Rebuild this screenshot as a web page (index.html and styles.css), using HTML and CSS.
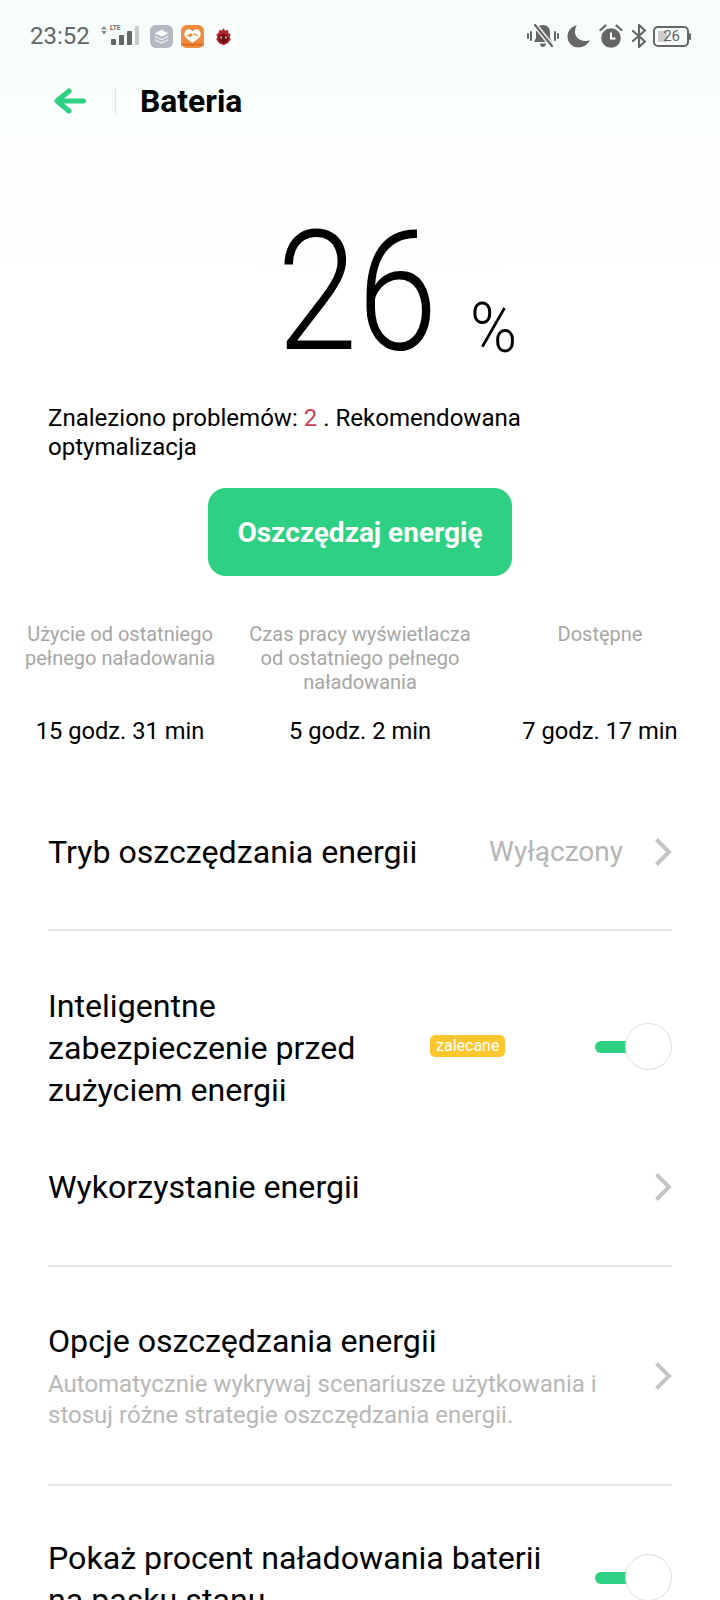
FILE: index.html
```html
<!DOCTYPE html>
<html>
  <head>
    <title>Bateria</title>
    <link rel="stylesheet" href="styles.css">
  </head>
  <body>
    <main id="screen">
      <div class="status-bar">
        <div class="status-left">
          <span class="clock">23:52</span>
          <svg class="signal" viewBox="0 0 42 24">
            <path d="M4 2l3 3.500H1zM1 7h6l-3 3.500z" fill="#8a8a8a" />
            <text x="10" y="5.500" class="lte">LTE</text>
            <rect x="11" y="15" width="5" height="6" rx="1" fill="#666" />
            <rect x="19" y="11" width="5" height="10" rx="1" fill="#666" />
            <rect x="27" y="7" width="5" height="14" rx="1" fill="#666" />
            <rect x="35" y="2" width="4" height="19" rx="1" fill="#c9cccb" />
          </svg>
          <svg class="app-icon" viewBox="0 0 24 24">
            <rect width="24" height="24" rx="6" fill="#b4b9c2" />
            <path d="M12 5l7 3.500-7 3.500-7-3.500z" fill="#fff" />
            <path d="M5 11l7 3.500 7-3.500v1.500l-7 3.500-7-3.500z" fill="#eef0f3" />
            <path d="M5 14.500l7 3.500 7-3.500v1.500l-7 3.500-7-3.500z" fill="#eef0f3" />
          </svg>
          <svg class="app-icon" viewBox="0 0 24 24">
            <rect width="24" height="24" rx="6" fill="#f08a3c" />
            <path d="M12 18.500C7 15 3.500 12.500 3.500 9 3.500 6.500 5.500 4.500 8 4.500c1.700 0 3 .8 4 2 1-1.200 2.300-2 4-2 2.500 0 4.500 2 4.500 4.500 0 3.500-3.500 6-8.500 9.500z" fill="#fff" />
            <path d="M6 11l4-2.500 2 1.500 2-1.500 4 2.500-1 .8-4-1.800-3 2.500-2-.5z" fill="#f08a3c" />
            <rect y="19.500" width="24" height="2" fill="#d96f22" />
          </svg>
          <svg class="app-icon" viewBox="0 0 24 24">
            <rect width="24" height="24" fill="#fff" />
            <path d="M12 3.500l1.800 2.500 2.700-1 .5 3 2.500 2-1 2.500 1 2.500-3 4-4.500 2-4.500-2-3-4 1-2.500-1-2.500 2.500-2 .5-3 2.700 1z" fill="#b3262b" />
            <circle cx="12" cy="14" r="5" fill="#6f1216" />
            <circle cx="9.500" cy="13" r="1" fill="#f3c9c9" />
            <circle cx="14.500" cy="13" r="1" fill="#f3c9c9" />
          </svg>
        </div>
        <div class="status-right">
          <svg class="status-icon bell" viewBox="0 0 32 24">
            <path d="M16 1c-4.500 0-7 3-7 7.500V14l-2 4h18l-2-4V8.500C23 4 20.500 1 16 1zM13 19.500h6c0 2-1.300 3.500-3 3.500s-3-1.500-3-3.500z" fill="#666" />
            <path d="M8 1l17 21" stroke="#f8fdfc" stroke-width="5" />
            <path d="M8 1l17 21" stroke="#666" stroke-width="2.200" stroke-linecap="round" />
            <path d="M4 8v8M1 10v4M28 8v8M31 10v4" stroke="#666" stroke-width="2" stroke-linecap="round" />
          </svg>
          <svg class="status-icon moon" viewBox="0 0 24 24">
            <path d="M10 1C4.500 2.500 0.500 6.800 0.500 12.500 0.500 18.800 5.500 23.500 11.500 23.500c5 0 9.500-3 11.500-7.500-1.200.7-2.800 1-4.500 1C12.500 17 8 13 8 8c0-2.500.7-5 2-7z" fill="#666" />
          </svg>
          <svg class="status-icon alarm" viewBox="0 0 24 24">
            <circle cx="12" cy="14" r="9.800" fill="#666" />
            <path d="M12 8.500V14.500h4.500" fill="none" stroke="#fff" stroke-width="2" />
            <path d="M1.500 6l5-4.500M22.500 6l-5-4.500" stroke="#666" stroke-width="2.200" stroke-linecap="round" />
          </svg>
          <svg class="status-icon bluetooth" viewBox="0 0 16 24">
            <path d="M2 7l12 10.500-6 5.500V1l6 5.500L2 17" fill="none" stroke="#666" stroke-width="2.200" stroke-linejoin="round" stroke-linecap="round" />
          </svg>
          <div class="battery">
            <span class="battery-fill"></span>
            <span class="battery-level">26</span>
          </div>
        </div>
      </div>

      <header class="title-bar">
        <svg class="back" viewBox="0 0 32 26">
          <path d="M29.500 13H4M15 3L3 13l12 10" fill="none" stroke="#2ed184" stroke-width="5" stroke-linecap="round" stroke-linejoin="round" />
        </svg>
        <span class="title-sep"></span>
        <h1>Bateria</h1>
      </header>

      <section class="level">
        <span class="level-value">26</span>
        <span class="level-unit">%</span>
      </section>

      <p class="notice">Znaleziono problemów: <span class="count">2</span> . Rekomendowana optymalizacja</p>

      <button class="save-btn">Oszczędzaj energię</button>

      <section class="stats">
        <div class="stat">
          <p class="stat-label">Użycie od ostatniego pełnego naładowania</p>
          <p class="stat-value">15 godz. 31 min</p>
        </div>
        <div class="stat">
          <p class="stat-label">Czas pracy wyświetlacza od ostatniego pełnego naładowania</p>
          <p class="stat-value">5 godz. 2 min</p>
        </div>
        <div class="stat">
          <p class="stat-label">Dostępne</p>
          <p class="stat-value">7 godz. 17 min</p>
        </div>
      </section>

      <section class="settings">
        <div class="row row-mode">
          <span class="row-text">Tryb oszczędzania energii</span>
          <span class="row-value">Wyłączony</span>
          <svg class="chevron" viewBox="0 0 18 30"><path d="M2.500 2.500L15 15 2.500 27.500" /></svg>
        </div>
        <hr>
        <div class="row row-smart">
          <span class="row-text row-narrow">Inteligentne zabezpieczenie przed zużyciem energii</span>
          <span class="badge">zalecane</span>
          <span class="switch"><span class="switch-track"></span><span class="switch-knob"></span></span>
        </div>
        <div class="row row-usage">
          <span class="row-text">Wykorzystanie energii</span>
          <svg class="chevron" viewBox="0 0 18 30"><path d="M2.500 2.500L15 15 2.500 27.500" /></svg>
        </div>
        <hr>
        <div class="row row-options">
          <div class="row-text">
            Opcje oszczędzania energii
            <p class="row-sub">Automatycznie wykrywaj scenariusze użytkowania i stosuj różne strategie oszczędzania energii.</p>
          </div>
          <svg class="chevron" viewBox="0 0 18 30"><path d="M2.500 2.500L15 15 2.500 27.500" /></svg>
        </div>
        <hr>
        <div class="row row-percent">
          <span class="row-text row-wide">Pokaż procent naładowania baterii na pasku stanu</span>
          <span class="switch"><span class="switch-track"></span><span class="switch-knob"></span></span>
        </div>
      </section>
    </main>
  </body>
</html>
```

FILE: styles.css
```css
* {
  margin: 0;
  padding: 0;
  box-sizing: border-box;
}

html,
body {
  height: 1600px;
  overflow: hidden;
}

body {
  background-color: #fff;
  font-family: Roboto, "Noto Sans", sans-serif;
  color: #000;
}

#screen {
  height: 1600px;
  overflow: hidden;
  background: linear-gradient(#f6fdfb 0, #fbfefd 140px, #fff 300px);
}

/* status bar */
.status-bar {
  height: 72px;
  padding: 0 31px 0 30px;
  display: flex;
  justify-content: space-between;
  align-items: center;
}

.status-left,
.status-right {
  display: flex;
  align-items: center;
}

.clock {
  font-size: 24px;
  color: #666;
  width: 70px;
}

.signal {
  width: 42px;
  height: 24px;
  margin-right: 8px;
}

.lte {
  font-size: 6.500px;
  font-weight: 700;
  fill: #666;
}

.app-icon {
  width: 23px;
  height: 23px;
  margin-right: 8px;
}

.status-icon {
  height: 24px;
  margin-right: 8px;
}

.bell {
  width: 32px;
}

.moon {
  width: 24px;
}

.alarm {
  width: 24px;
}

.bluetooth {
  width: 16px;
  margin-right: 6px;
}

.battery {
  position: relative;
  width: 36px;
  height: 21px;
  border: 2px solid #666;
  border-radius: 5px;
  font-size: 15px;
  line-height: 17px;
  text-align: right;
  color: #666;
}

.battery:after {
  content: '';
  position: absolute;
  right: -4px;
  top: 5px;
  width: 2px;
  height: 7px;
  background-color: #666;
  border-radius: 1px;
}

.battery-fill {
  position: absolute;
  left: 3px;
  top: 3px;
  bottom: 3px;
  width: 9px;
  background-color: #ccc;
}

.battery-level {
  position: relative;
  padding-right: 7px;
}

/* title */
.title-bar {
  height: 58px;
  padding-left: 54px;
  display: flex;
  align-items: center;
}

.back {
  width: 32px;
  height: 26px;
}

.title-sep {
  width: 1px;
  height: 28px;
  margin: 0 24px 0 29px;
  background-color: #dfe3e2;
}

h1 {
  font-size: 31.800px;
  font-weight: 700;
}

/* big percentage */
.level {
  height: 274px;
  display: flex;
  align-items: flex-start;
  padding: 79px 0 0 277px;
}

.level-value {
  display: inline-block;
  width: 193px;
  font-size: 167px;
  line-height: 167px;
  font-weight: 300;
  transform: scaleX(0.867);
  transform-origin: left top;
}

.level-unit {
  display: inline-block;
  font-size: 70px;
  line-height: 70px;
  font-weight: 300;
  margin-top: 84px;
  transform: scaleX(0.91);
  transform-origin: left top;
}

.notice {
  padding: 0 150px 0 48px;
  font-size: 24.050px;
  line-height: 29px;
}

.count {
  color: #c9425a;
}

.save-btn {
  display: block;
  width: 304px;
  height: 88px;
  margin: 26px auto 0;
  border: none;
  border-radius: 18px;
  background-color: #2ed184;
  color: #fff;
  font-family: inherit;
  font-size: 28px;
  font-weight: 700;
}

/* usage stats */
.stats {
  display: flex;
  margin-top: 46px;
}

.stat {
  flex: 1;
  display: flex;
  flex-direction: column;
  height: 123px;
  padding: 0 8px;
  text-align: center;
}

.stat-label {
  flex: 1;
  font-size: 20px;
  line-height: 24px;
  color: #a6a6a6;
}

.stat-value {
  font-size: 23.700px;
  line-height: 28px;
}

/* settings list */
.settings {
  padding: 0 48px;
}

hr {
  border: none;
  height: 2px;
  background-color: #e4e6e6;
}

.row {
  display: flex;
  align-items: center;
  font-size: 32.150px;
  line-height: 42px;
}

.row-text {
  flex: 1;
}

.row-mode {
  height: 184px;
  padding-top: 30px;
}

.row-value {
  font-size: 28px;
  color: #b5b5b5;
  margin-right: 31px;
}

.chevron {
  flex: none;
  width: 18px;
  height: 30px;
  fill: none;
  stroke: #c4c6c6;
  stroke-width: 4;
}

.row-smart {
  height: 180px;
  padding-top: 54px;
}

.row-narrow {
  flex: none;
  width: 322px;
  margin-right: 60px;
}

.badge {
  margin-bottom: 4px;
  padding: 0 6px;
  height: 22px;
  line-height: 22px;
  border-radius: 5px;
  background-color: #fcc62f;
  color: #fff;
  font-size: 16px;
}

.switch {
  position: relative;
  margin-left: auto;
  width: 77px;
  height: 47px;
  margin-bottom: 4px;
}

.switch-track {
  position: absolute;
  left: 0;
  top: 18px;
  width: 40px;
  height: 12px;
  border-radius: 6px;
  background-color: #2ed184;
}

.switch-knob {
  position: absolute;
  right: 0;
  top: 0;
  width: 47px;
  height: 47px;
  border-radius: 50%;
  background-color: #fff;
  border: 1px solid #dcdede;
}

.row-usage {
  height: 154px;
  padding-bottom: 2px;
}

.row-options {
  height: 217px;
}

.row-sub {
  margin-top: 7px;
  font-size: 24px;
  line-height: 31px;
  color: #b8b8b8;
}

.row-percent {
  height: 84px;
  margin-top: 51px;
}

.row-wide {
  flex: none;
  width: 520px;
}
```
